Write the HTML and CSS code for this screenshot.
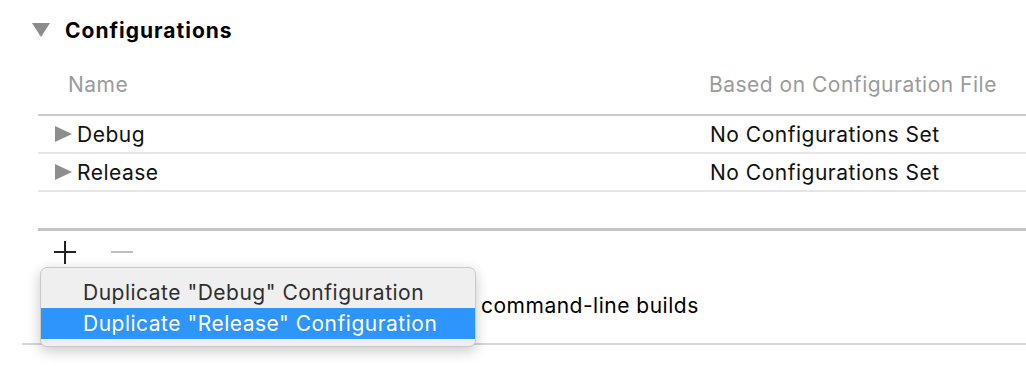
FILE: index.html
```html
<!DOCTYPE html>
<html lang="en">
<head>
  <meta charset="UTF-8">
  <title>Configurations</title>
  <link rel="stylesheet" href="styles.css">
</head>
<body>
  <div class="section">
    <div class="section-head">
      <svg class="disclosure" width="18" height="14" viewBox="0 0 18 14"><path d="M0 0 H18 L9 14 Z" fill="#8c8c8c"/></svg>
      <h2>Configurations</h2>
    </div>

    <div class="config-table">
      <div class="row head">
        <div class="col-name">Name</div>
        <div class="col-file">Based on Configuration File</div>
      </div>
      <div class="row item">
        <div class="col-name">
          <svg class="expand" width="17" height="16" viewBox="0 0 17 16"><path d="M0 0 L17 8 L0 16 Z" fill="#8e8e8e"/></svg>
          Debug
        </div>
        <div class="col-file">No Configurations Set</div>
      </div>
      <div class="row item">
        <div class="col-name">
          <svg class="expand" width="17" height="16" viewBox="0 0 17 16"><path d="M0 0 L17 8 L0 16 Z" fill="#8e8e8e"/></svg>
          Release
        </div>
        <div class="col-file">No Configurations Set</div>
      </div>
      <div class="row empty"></div>
    </div>

    <div class="toolbar">
      <button class="tool">
        <svg width="24" height="24" viewBox="0 0 24 24"><path d="M12 1 V24 M1 12 H23" stroke="#222" stroke-width="2"/></svg>
      </button>
      <button class="tool">
        <svg width="24" height="24" viewBox="0 0 24 24"><path d="M1 12 H23" stroke="#bdbdbd" stroke-width="2"/></svg>
      </button>
    </div>

    <div class="cmdline">
      <span class="cmd-text">command-line builds</span>
      <div class="menu">
        <div class="menu-item">Duplicate "Debug" Configuration</div>
        <div class="menu-item selected">Duplicate "Release" Configuration</div>
      </div>
    </div>
  </div>
</body>
</html>
```

FILE: styles.css
```css
/* General styles */
body {
  font-family: "Inter", "Liberation Sans", sans-serif;
  margin: 0;
  padding: 0;
  background: #fff;
  color: #111;
  font-size: 21px;
  letter-spacing: 0.5px;
}

* {
  box-sizing: border-box;
}

.section {
  width: 1026px;
  height: 366px;
  overflow: hidden;
}

.section-head {
  display: flex;
  align-items: center;
  height: 60px;
  padding-left: 32px;
}

.section-head .disclosure {
  margin-right: 15px;
}

.section-head h2 {
  font-size: 21px;
  font-weight: bold;
  letter-spacing: 1px;
  margin: 0;
  color: #000;
}

/* Table */
.config-table {
  margin-left: 38px;
}

.row {
  display: flex;
  align-items: center;
}

.row.head {
  height: 56px;
  padding-bottom: 5px;
  color: #9b9b9b;
  border-bottom: 2px solid #cacaca;
}

.row.head .col-name {
  padding-left: 30px;
}

.col-name {
  width: 671px;
  display: flex;
  align-items: center;
}

.row.item {
  height: 38px;
  border-bottom: 2px solid #e6e6e6;
}

.row.item .col-name {
  padding-left: 17px;
}

.row.item .col-file {
  padding-left: 1px;
}

.expand {
  margin-right: 5px;
}

.row.empty {
  height: 39px;
  border-bottom: 3px solid #c4c4c4;
}

/* Add / remove buttons */
.toolbar {
  display: flex;
  gap: 33px;
  padding: 9px 0 0 53px;
  height: 33px;
}

.tool {
  background: none;
  border: none;
  padding: 0;
  width: 24px;
  height: 24px;
}

/* Command line row with popup menu */
.cmdline {
  position: relative;
  margin-left: 22px;
  height: 81px;
  border-bottom: 2px solid #d6d6d6;
}

.cmd-text {
  position: absolute;
  left: 459px;
  top: 29px;
  color: #000;
}

.menu {
  position: absolute;
  left: 18px;
  top: 3px;
  width: 436px;
  padding: 9px 0 7px;
  background: #efefef;
  border: 1px solid #c9c9c9;
  border-radius: 7px;
  box-shadow: 0 4px 14px rgba(0, 0, 0, 0.22);
}

.menu-item {
  height: 31px;
  line-height: 31px;
  padding-left: 42px;
  color: #2e2e2e;
}

.menu-item.selected {
  background: #2d95fb;
  color: #fff;
}
```
